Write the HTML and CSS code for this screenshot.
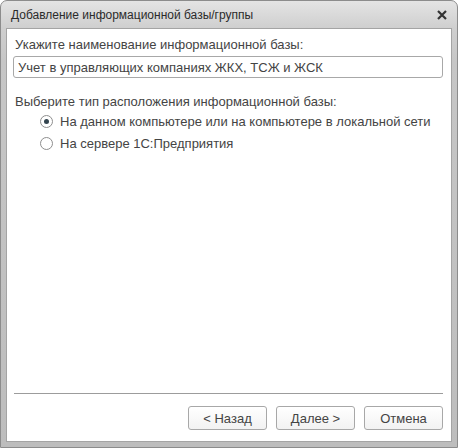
FILE: index.html
```html
<!DOCTYPE html>
<html lang="ru">
<head>
    <meta charset="UTF-8">
    <title>Добавление информационной базы/группы</title>
    <link rel="stylesheet" href="styles.css">
</head>
<body>
    <div class="window">
        <div class="titlebar">
            <span class="title">Добавление информационной базы/группы</span>
            <span class="close">
                <svg width="10" height="10" viewBox="0 0 10 10">
                    <path d="M1 1 L9 9 M9 1 L1 9" stroke="#333" stroke-width="2.2" fill="none"/>
                </svg>
            </span>
        </div>
        <div class="client">
            <div class="content">
                <label class="caption" for="baseName">Укажите наименование информационной базы:</label>
                <input type="text" id="baseName" class="field" value="Учет в управляющих компаниях ЖКХ, ТСЖ и ЖСК">

                <div class="caption caption-gap">Выберите тип расположения информационной базы:</div>
                <div class="options">
                    <div class="option">
                        <span class="radio checked"></span>
                        <span>На данном компьютере или на компьютере в локальной сети</span>
                    </div>
                    <div class="option">
                        <span class="radio"></span>
                        <span>На сервере 1С:Предприятия</span>
                    </div>
                </div>
            </div>
            <div class="footer">
                <hr class="separator">
                <div class="buttons">
                    <button class="btn">&lt; Назад</button>
                    <button class="btn">Далее &gt;</button>
                    <button class="btn">Отмена</button>
                </div>
            </div>
        </div>
    </div>
</body>
</html>
```

FILE: styles.css
```css
body {
    margin: 0;
    font-family: Arial, "Liberation Sans", sans-serif;
    background: #ffffff;
}

.window {
    width: 458px;
    height: 448px;
    box-sizing: border-box;
    display: flex;
    flex-direction: column;
    border: 1px solid #8c8c8c;
    border-radius: 7px 7px 0 0;
    background: linear-gradient(#e4e4e4, #cfcfcf 27px, #c6c6c6 60px, #bdbdbd);
}

.titlebar {
    height: 27px;
    display: flex;
    align-items: center;
    justify-content: space-between;
    padding: 0 10px 0 10px;
}

.title {
    font-size: 12px;
    color: #2b2b2b;
}

.close {
    display: flex;
}

.client {
    flex: 1;
    display: flex;
    flex-direction: column;
    margin: 0 5px 5px 5px;
    background: #ffffff;
    border: 1px solid #a4a4a4;
    padding: 8px 8px 11px 6px;
}

.content {
    flex: 1;
    display: flex;
    flex-direction: column;
}

.caption {
    display: block;
    font-size: 13px;
    line-height: 15px;
    color: #444444;
    padding-left: 2px;
}

.caption-gap {
    margin-top: 16px;
}

.field {
    margin-top: 4px;
    height: 22px;
    box-sizing: border-box;
    border: 1px solid #a8a8a8;
    border-radius: 3px;
    padding: 0 4px;
    font-family: Arial, "Liberation Sans", sans-serif;
    font-size: 13px;
    color: #444444;
    outline: none;
}

.options {
    margin-top: 1px;
    padding-left: 27px;
}

.option {
    height: 22px;
    display: flex;
    align-items: center;
    gap: 7px;
    font-size: 13px;
    color: #444444;
}

.radio {
    width: 13px;
    height: 13px;
    box-sizing: border-box;
    border: 1px solid #8e8e8e;
    border-radius: 50%;
    background: #ffffff;
    display: flex;
    align-items: center;
    justify-content: center;
}

.radio.checked::after {
    content: "";
    width: 5px;
    height: 5px;
    border-radius: 50%;
    background: #33444f;
}

.separator {
    margin: 0 0 0 1px;
    border: none;
    border-top: 1px solid #9c9c9c;
}

.buttons {
    display: flex;
    justify-content: flex-end;
    gap: 9px;
    margin-top: 12px;
}

.btn {
    width: 79px;
    height: 24px;
    border: 1px solid #a8a8a8;
    border-radius: 3px;
    background: linear-gradient(#ffffff, #f2f2f2);
    font-family: Arial, "Liberation Sans", sans-serif;
    font-size: 13px;
    color: #444444;
    padding: 0;
}
```
